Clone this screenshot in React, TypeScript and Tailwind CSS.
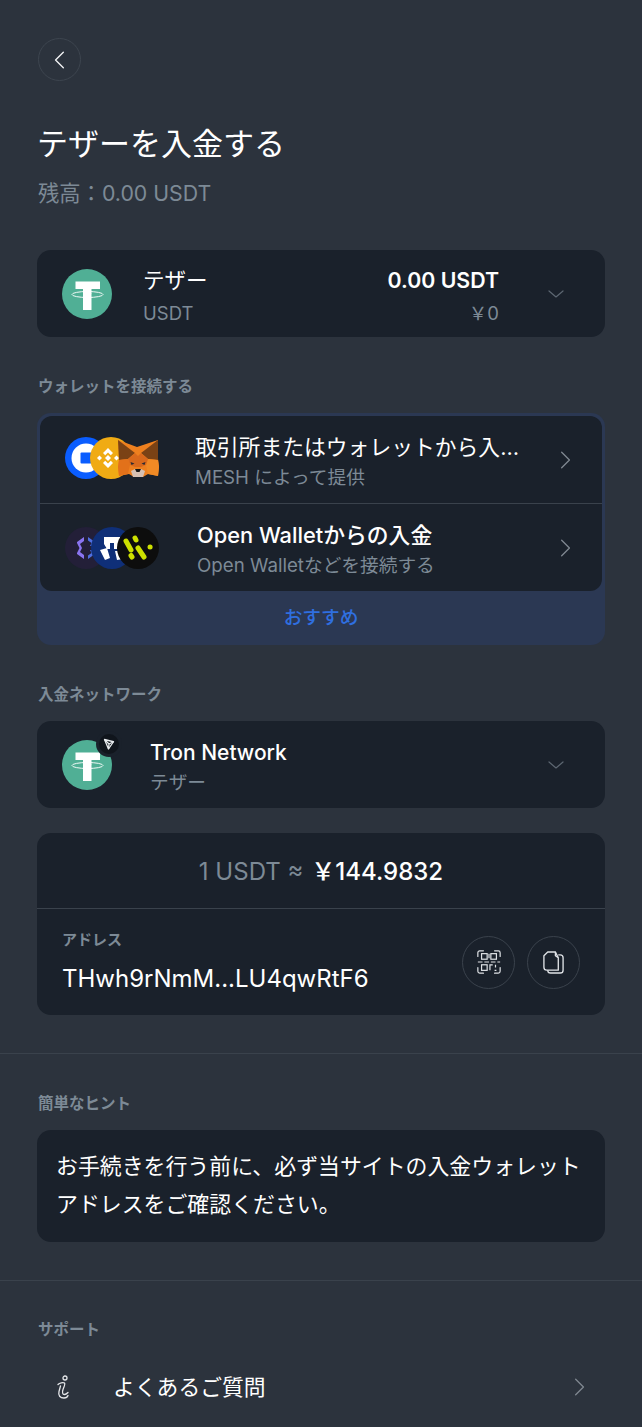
import React from "react";

const font = { fontFamily: 'Inter, "Noto Sans CJK JP", sans-serif' };

function Tether({ size = 50 }: { size?: number }) {
  return (
    <svg width={size} height={size} viewBox="0 0 50 50" className="shrink-0">
      <circle cx="25" cy="25" r="25" fill="#50af95" />
      <path d="M13.500 12.500h24.500v7.500h-8.500v4.500h-8.500V20h-7.500z" fill="#fff" />
      <path d="M21 24h8.500v17H21z" fill="#fff" />
      <ellipse cx="25.500" cy="25.500" rx="15.500" ry="3" fill="none" stroke="#fff" strokeWidth="0.900" />
    </svg>
  );
}

function Chevron({ dir, size = 18, color = "#7c8894" }: { dir: "down" | "right" | "left"; size?: number; color?: string }) {
  const d = dir === "down" ? "M2 6l7 6 7-6" : dir === "right" ? "M6 2l7 7-7 7" : "M12 2L5 9l7 7";
  return (
    <svg width={size} height={size} viewBox="0 0 18 18" fill="none" stroke={color} strokeWidth="1.200" strokeLinecap="round" strokeLinejoin="round" className="shrink-0">
      <path d={d} />
    </svg>
  );
}

function Label({ children }: { children: React.ReactNode }) {
  return <div className="ml-[1px] text-[15.5px] leading-[20px] font-semibold text-[#7d8a96]">{children}</div>;
}

function Fox() {
  return (
    <svg width="41" height="37" viewBox="0 0 41 37" className="absolute left-[53px] top-[3px]">
      <path d="M19 7L40 0l0 19 1 8-1 9-10-2-5 3h-9l-5-3-10 2-1-9 1-8L0 0z" fill="#ee801f" />
      <path d="M0 0l17 13-7 6-9 1z" fill="#7a4215" />
      <path d="M40 0L23 13l7 6 10 1z" fill="#7a4215" />
      <path d="M0 27l1-7 9-1 2 6-2 9-9 2z" fill="#e2711a" />
      <path d="M41 27l-1-7-10-1-2 6 2 9 10 2z" fill="#f08a25" />
      <path d="M10 19l7-6 3 3 3-3 7 6-2 6-5 2h-6l-5-2z" fill="#d9691c" />
      <path d="M12.500 22l4 1.500-3 1.500zM27.500 22l-4 1.500 3 1.500z" fill="#2b2b35" />
      <path d="M13 31l4-2h6l4 2-2 6h-10z" fill="#d7c1b3" />
      <path d="M17 29h6l-1.500 3h-3z" fill="#161616" />
    </svg>
  );
}

function IconsA() {
  return (
    <div className="relative mb-[3px] h-[42px] w-[120px] shrink-0">
      <svg width="42" height="42" viewBox="0 0 42 42" className="absolute left-0 top-0">
        <circle cx="21" cy="21" r="21" fill="#0a5dff" />
        <circle cx="21" cy="21" r="14.500" fill="#fff" />
        <rect x="15.500" y="15.500" width="11" height="11" rx="1" fill="#0a5dff" />
      </svg>
      <svg width="42" height="42" viewBox="0 0 42 42" className="absolute left-[25px] top-0">
        <circle cx="21" cy="21" r="21" fill="#f0ab14" />
        <g fill="#fff" transform="translate(-3 0)">
          <path d="M21 11l5 5-2.200 2.200L21 15.500l-2.800 2.700L16 16z" />
          <path d="M21 31l5-5-2.200-2.200L21 26.500l-2.800-2.700L16 26z" />
          <path d="M12.500 18.500l2.500 2.500-2.500 2.500L10 21z" />
          <path d="M29.500 18.500l2.500 2.500-2.500 2.500L27 21z" />
          <path d="M21 18l3 3-3 3-3-3z" />
        </g>
      </svg>
      <Fox />
    </div>
  );
}

function IconsB() {
  return (
    <div className="relative h-[42px] w-[120px] shrink-0">
      <svg width="42" height="42" viewBox="0 0 42 42" className="absolute left-0 top-0">
        <circle cx="21" cy="21" r="21" fill="#231f38" />
        <path d="M19 10l-7 5v1l2.500 5-2.500 5v1l7 5v-4l-4-3 2-4-2-4 4-3z" fill="#8a74f0" />
        <path d="M23 10l7 5v1l-2 3h-3l1.500-3-3.500-2.500zM23 32l7-5v-1l-2-3h-3l1.500 3-3.500 2.500z" fill="#4f6fe0" />
      </svg>
      <svg width="42" height="42" viewBox="0 0 42 42" className="absolute left-[26px] top-0">
        <circle cx="21" cy="21" r="21" fill="#0f2f78" />
        <path d="M13 10h16v7l-3 5h-3v-6h-4v6h-3l-3-5z" fill="#fff" />
        <path d="M9 23l7-2 3 10-5 2zM24 24h6l2 8-6 1z" fill="#fff" />
      </svg>
      <svg width="42" height="42" viewBox="0 0 42 42" className="absolute left-[52px] top-0">
        <circle cx="21" cy="21" r="21" fill="#0d0d0d" />
        <g stroke="#cde000" strokeWidth="5" strokeLinecap="round" fill="none">
          <path d="M9 14l5 9" />
          <path d="M18 11l1 2" />
          <path d="M21 21l6 9" />
          <path d="M33 20l0.100 0" />
          <path d="M14 28.500l1 1.500" />
        </g>
      </svg>
    </div>
  );
}

function Tron() {
  return (
    <div className="absolute left-[34px] -top-[9px] flex h-[26px] w-[26px] items-center justify-center rounded-full border-[3px] border-[#1a212b] bg-[#10151c]">
      <svg width="12" height="12" viewBox="0 0 24 24" fill="none" stroke="#e8ebee" strokeWidth="2.600" strokeLinejoin="round">
        <path d="M3 3l18 4.500L11 22z" />
        <path d="M3 3l9 9 9-4.500M12 12l-1 10" />
      </svg>
    </div>
  );
}

function Row({ title, sub, icons, titleClass, ml }: { title: string; sub: string; icons: React.ReactNode; titleClass: string; ml: string }) {
  return (
    <div className="flex h-[87px] items-center pl-[25px] pr-[27px]">
      {icons}
      <div className={`min-w-0 flex-1 pt-[5px] ${ml}`}>
        <div className={`max-w-[325px] truncate leading-[30px] text-white ${titleClass}`}>{title}</div>
        <div className="mt-[1px] truncate text-[18.7px] leading-[30px] text-[#7d8a96]">{sub}</div>
      </div>
      <Chevron dir="right" size={20} color="#7f8790" />
    </div>
  );
}

export default function App() {
  return (
    <div style={font} className="h-[1427px] w-[642px] overflow-hidden bg-[#2c333d]">
      <div className="px-[37px] pt-[38px]">
        <button className="ml-[1px] flex h-[43px] w-[43px] items-center justify-center rounded-full border border-[#3d454f]">
          <Chevron dir="left" size={20} color="#f2f3f5" />
        </button>
        <h1 className="mt-[43px] text-[31px] leading-[40px] font-normal text-white">テザーを入金する</h1>
        <div className="mt-[14px] ml-[1px] text-[21.3px] leading-[30px] text-[#7d8a96]">残高：0.00 USDT</div>

        <div className="mt-[42px] flex h-[87px] items-center rounded-[14px] bg-[#1a212b] pl-[25px] pr-[40px]">
          <Tether />
          <div className="ml-[31px] flex-1 pt-[5px]">
            <div className="text-[21.5px] leading-[30px] font-normal text-white">テザー</div>
            <div className="mt-[3px] text-[18.5px] leading-[30px] text-[#7d8a96]">USDT</div>
          </div>
          <div className="pt-[5px] text-right">
            <div className="text-[21.3px] leading-[30px] font-semibold text-white">0.00 USDT</div>
            <div className="mt-[3px] text-[18.5px] leading-[30px] text-[#7d8a96]">￥0</div>
          </div>
          <div className="ml-[48px]">
            <Chevron dir="down" size={18} color="#5d6772" />
          </div>
        </div>

        <div className="mt-[40px]"><Label>ウォレットを接続する</Label></div>
        <div className="mt-[16px] rounded-[14px] bg-[#2b3853] px-[3px] pt-[3px]">
          <div className="overflow-hidden rounded-[12px] bg-[#1a212b]">
            <Row title="取引所またはウォレットから入金する" sub="MESH によって提供" icons={<IconsA />} titleClass="text-[21.8px] font-normal" ml="ml-[10px]" />
            <div className="h-[1px] bg-[#3a424c]" />
            <Row title="Open Walletからの入金" sub="Open Walletなどを接続する" icons={<IconsB />} titleClass="text-[21.8px] font-medium" ml="ml-[12px]" />
          </div>
          <div className="flex h-[54px] items-center justify-center text-[18.7px] font-medium text-[#2f6fe0]">おすすめ</div>
        </div>

        <div className="mt-[40px]"><Label>入金ネットワーク</Label></div>
        <div className="mt-[16px] flex h-[87px] items-center rounded-[14px] bg-[#1a212b] pl-[25px] pr-[40px]">
          <div className="relative shrink-0">
            <Tether />
            <Tron />
          </div>
          <div className="ml-[38px] flex-1 pt-[6px]">
            <div className="text-[21px] leading-[30px] font-medium text-white">Tron Network</div>
            <div className="text-[18.7px] leading-[30px] text-[#7d8a96]">テザー</div>
          </div>
          <Chevron dir="down" size={18} color="#5d6772" />
        </div>

        <div className="mt-[25px] rounded-[14px] bg-[#1a212b]">
          <div className="flex h-[76px] items-center justify-center border-b border-[#3a424c] pt-[3px] text-[24px] font-medium">
            <span className="font-normal text-[#7d8a96]">1 USDT ≈</span>
            <span className="ml-[8px] text-white">￥144.9832</span>
          </div>
          <div className="flex h-[106px] items-center pl-[25px] pr-[25px]">
            <div className="flex-1 pt-[2px]">
              <div className="text-[15px] leading-[20px] font-semibold text-[#7d8a96]">アドレス</div>
              <div className="mt-[11px] text-[24px] leading-[36px] font-normal text-white">THwh9rNmM...LU4qwRtF6</div>
            </div>
            <button className="flex h-[53px] w-[53px] items-center justify-center rounded-full border border-[#3a424c]">
              <svg width="26" height="26" viewBox="0 0 28 28" fill="none" stroke="#dfe2e6" strokeWidth="1.300">
                <path d="M2 8V4a2 2 0 0 1 2-2h4M20 2h4a2 2 0 0 1 2 2v4M2 20v4a2 2 0 0 0 2 2h4M26 20v4a2 2 0 0 1-2 2h-4" strokeLinecap="round" />
                <rect x="6" y="5" width="6" height="6" />
                <rect x="16" y="5" width="6" height="6" />
                <rect x="6" y="17" width="6" height="6" />
                <path d="M2 14h24" strokeDasharray="5 2" />
                <path d="M14 5v5M15 23v-6h3M21 17v3M20 23h2" />
              </svg>
            </button>
            <button className="ml-[12px] flex h-[53px] w-[53px] items-center justify-center rounded-full border border-[#3a424c]">
              <svg width="23" height="25" viewBox="0 0 24 26" fill="none" stroke="#dfe2e6" strokeWidth="1.400" strokeLinejoin="round">
                <path d="M6 2h8v4l3 2v13H5a3 3 0 0 1-3-3V6z" />
                <path d="M14 2l3 6" />
                <path d="M17 5h2a3 3 0 0 1 3 3v13a3 3 0 0 1-3 3H9a3 3 0 0 1-3-3" />
              </svg>
            </button>
          </div>
        </div>
      </div>

      <div className="mt-[38px] h-[1px] bg-[#3a424c]" />

      <div className="px-[37px] pt-[40px]">
        <Label>簡単なヒント</Label>
        <div className="mt-[16px] h-[112px] rounded-[14px] bg-[#1a212b] px-[19px] py-[17px] text-[21.9px] leading-[38px] font-normal text-white">
          お手続きを行う前に、必ず当サイトの入金ウォレットアドレスをご確認ください。
        </div>
      </div>

      <div className="mt-[38px] h-[1px] bg-[#3a424c]" />

      <div className="px-[37px] pt-[39px]">
        <Label>サポート</Label>
        <div className="mt-[31px] flex h-[32px] items-center pl-[18px] pr-[16px]">
          <svg width="16" height="24" viewBox="0 0 16 24" fill="none" stroke="#e4e6e9" strokeWidth="1.300" strokeLinecap="round" strokeLinejoin="round" className="shrink-0">
            <circle cx="10" cy="3" r="2" />
            <path d="M3 9.500c1.500-1.500 5-2.500 6.500-1.500 1 1-.5 4-1.500 6.500-1 3-.5 5 1.500 5 1.500 0 2.500-1 3.500-2" />
            <path d="M5.500 11l-1.500 5.500c-1 4 1 6.500 5 6.500 2 0 3.500-1 4-2.500" />
          </svg>
          <div className="ml-[42px] flex-1 text-[21.8px] font-normal text-white">よくあるご質問</div>
          <Chevron dir="right" size={20} color="#7f8790" />
        </div>
      </div>
    </div>
  );
}
